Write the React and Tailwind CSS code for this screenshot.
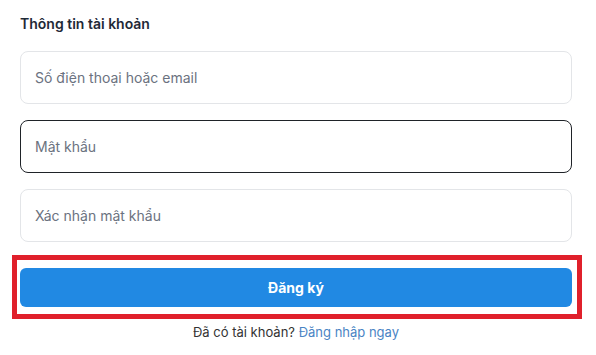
import React from 'react';

export default function App() {
  return (
    <div className="w-[596px] h-[355px] bg-white pl-5 pr-6 pt-[14px] font-['Inter',sans-serif]">
      <h2 className="text-sm leading-5 font-semibold text-[#1f2937]">Thông tin tài khoản</h2>

      <form className="mt-[17px]" onSubmit={(e) => e.preventDefault()}>
        <div className="flex flex-col gap-4">
          <input
            type="text"
            placeholder="Số điện thoại hoặc email"
            className="w-full h-[53px] px-[14px] rounded-lg border border-[#e3e5e8] text-sm text-[#1f2937] placeholder:text-[#6b7280] outline-none"
          />
          <input
            type="password"
            placeholder="Mật khẩu"
            className="w-full h-[53px] px-[14px] rounded-lg border border-[#1f2328] text-sm text-[#1f2937] placeholder:text-[#6b7280] outline-none"
          />
          <input
            type="password"
            placeholder="Xác nhận mật khẩu"
            className="w-full h-[53px] px-[14px] rounded-lg border border-[#e3e5e8] text-sm text-[#1f2937] placeholder:text-[#6b7280] outline-none"
          />
        </div>

        <div className="relative mt-[26px]">
          <button
            type="submit"
            className="w-full h-[39px] rounded-md bg-[#2189e3] text-white text-sm font-bold"
          >
            Đăng ký
          </button>
          {/* annotation frame */}
          <div className="absolute -left-2 -right-[10px] -top-[13px] -bottom-[12px] border-[5px] border-[#e0202b] pointer-events-none" />
        </div>
      </form>

      <p className="mt-[15px] text-center text-[13px] leading-5 text-[#333]">
        Đã có tài khoản? <a href="#" className="text-[#4a84c4]">Đăng nhập ngay</a>
      </p>
    </div>
  );
}
